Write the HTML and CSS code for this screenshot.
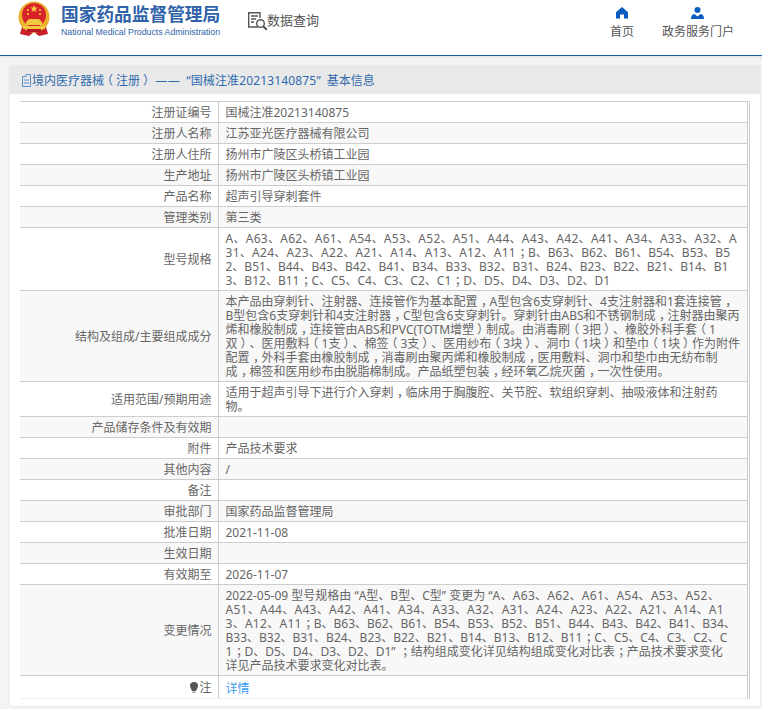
FILE: index.html
```html
<!DOCTYPE html>
<html lang="zh-CN">
<head>
<meta charset="utf-8">
<title>国家药品监督管理局 数据查询</title>
<link rel="stylesheet" href="styles.css">
</head>
<body>
<header class="header">
  <div class="brand">
    <svg class="emblem" width="32" height="35" viewBox="0 0 32 35">
      <path d="M4 26 L2 33 L11 35 L16 31 L21 35 L30 33 L28 26 Z" fill="#c8202a"/>
      <circle cx="16" cy="16" r="15.500" fill="#eab02c"/>
      <circle cx="16" cy="14" r="12" fill="#d8232a"/>
      <path d="M16 4l1 2.600h2.800l-2.200 1.700.8 2.700-2.400-1.600-2.400 1.600.8-2.700-2.200-1.700H15z" fill="#f5d142"/>
      <circle cx="10" cy="9" r="1" fill="#f5d142"/><circle cx="22" cy="9" r="1" fill="#f5d142"/>
      <circle cx="10" cy="13" r="1" fill="#f5d142"/><circle cx="22" cy="13" r="1" fill="#f5d142"/>
      <path d="M8 21l3-3h10l3 3v3H8z" fill="#f3c83e"/>
      <rect x="5" y="25" width="22" height="3" fill="#f3c83e"/>
      <rect x="9" y="28" width="14" height="3" fill="#b9171f"/>
    </svg>
    <div class="brand-text">
      <div class="brand-cn">国家药品监督管理局</div>
      <div class="brand-en">National Medical Products Administration</div>
    </div>
    <div class="query">
      <svg class="query-icon" width="21" height="20" viewBox="0 0 21 20" fill="none" stroke="#555" stroke-width="1.400">
        <path d="M11 16H1.700V1.700H13V7"/>
        <path d="M4 5h7M4 8h5M4 11h3"/>
        <circle cx="13.500" cy="12.500" r="3.800"/>
        <path d="M16.200 15.200l3.600 3.600" stroke-width="2"/>
      </svg>
      <span class="query-text">数据查询</span>
    </div>
  </div>
  <nav class="nav">
    <a class="nav-item">
      <svg width="12" height="12" viewBox="0 0 12 12"><path d="M6 0L12 5.200V11.500H8V7.500H4V11.500H0V5.200Z" fill="#0a5cc0"/></svg>
      <span>首页</span>
    </a>
    <a class="nav-item">
      <svg width="13" height="12" viewBox="0 0 13 12"><circle cx="6.500" cy="3" r="3" fill="#0a5cc0"/><path d="M0 12c0-3 1-4.500 3.500-5L6.500 9.500 9.500 7C12 7.500 13 9 13 12Z" fill="#0a5cc0"/></svg>
      <span>政务服务门户</span>
    </a>
  </nav>
</header>
<div class="hatch"></div>
<main class="panel">
  <h2 class="title"><svg class="title-icon" width="11" height="13" viewBox="0 0 11 13" fill="none" stroke="#5b8fd0" stroke-width="1"><path d="M1.500 2.500H5V.5H9.500V12.500H1.500Z"/><path d="M3 6H8M3 9H8"/></svg><span>境内医疗器械<span class="o">（</span>注册<span class="c">）</span> <span class="dash">——</span><span class="reg">“国械注准20213140875”</span>基本信息</span></h2>
  <div class="table-wrap">
    <table class="info">
      <tr><th>注册证编号</th><td>国械注准20213140875</td></tr>
      <tr><th>注册人名称</th><td>江苏亚光医疗器械有限公司</td></tr>
      <tr><th>注册人住所</th><td>扬州市广陵区头桥镇工业园</td></tr>
      <tr><th>生产地址</th><td>扬州市广陵区头桥镇工业园</td></tr>
      <tr><th>产品名称</th><td>超声引导穿刺套件</td></tr>
      <tr><th>管理类别</th><td>第三类</td></tr>
      <tr><th>型号规格</th><td><span class="a">A、A63、A62、A61、A54、A53、A52、A51、A44、A43、A42、A41、A34、A33、A32、A<br>31、A24、A23、A22、A21、A14、A13、A12、A11</span><span class="p">；</span>B、B63、B62、B61、B54、B53、B5<br>2、B51、B44、B43、B42、B41、B34、B33、B32、B31、B24、B23、B22、B21、B14、B1<br>3、B12、B11<span class="p">；</span>C、C5、C4、C3、C2、C1<span class="p">；</span>D、D5、D4、D3、D2、D1</td></tr>
      <tr><th>结构及组成/主要组成成分</th><td>本产品由穿刺针、注射器、连接管作为基本配置<span class="p">，</span>A型包含6支穿刺针、4支注射器和1套连接管<span class="p">，</span><br>B型包含6支穿刺针和4支注射器<span class="p">，</span>C型包含6支穿刺针。穿刺针由ABS和不锈钢制成<span class="p">，</span>注射器由聚丙<br>烯和橡胶制成<span class="p">，</span>连接管由ABS和PVC(TOTM增塑<span class="c">）</span>制成。由消毒刷<span class="o">（</span>3把<span class="c">）</span>、橡胶外科手套<span class="o">（</span>1<br>双<span class="c">）</span>、医用敷料<span class="o">（</span>1支<span class="c">）</span>、棉签<span class="o">（</span>3支<span class="c">）</span>、医用纱布<span class="o">（</span>3块<span class="c">）</span>、洞巾<span class="o">（</span>1块<span class="c">）</span>和垫巾<span class="o">（</span>1块<span class="c">）</span>作为附件<br>配置<span class="p">，</span>外科手套由橡胶制成<span class="p">，</span>消毒刷由聚丙烯和橡胶制成<span class="p">，</span>医用敷料、洞巾和垫巾由无纺布制<br>成<span class="p">，</span>棉签和医用纱布由脱脂棉制成。产品纸塑包装<span class="p">，</span>经环氧乙烷灭菌<span class="p">，</span>一次性使用。</td></tr>
      <tr><th>适用范围/预期用途</th><td>适用于超声引导下进行介入穿刺<span class="p">，</span>临床用于胸腹腔、关节腔、软组织穿刺、抽吸液体和注射药<br>物。</td></tr>
      <tr><th>产品储存条件及有效期</th><td></td></tr>
      <tr><th>附件</th><td>产品技术要求</td></tr>
      <tr><th>其他内容</th><td>/</td></tr>
      <tr><th>备注</th><td></td></tr>
      <tr><th>审批部门</th><td>国家药品监督管理局</td></tr>
      <tr><th>批准日期</th><td>2021-11-08</td></tr>
      <tr><th>生效日期</th><td></td></tr>
      <tr><th>有效期至</th><td>2026-11-07</td></tr>
      <tr><th>变更情况</th><td>2022-05-09 型号规格由 “A型、B型、C型” 变更为 “<span class="a">A、A63、A62、A61、A54、A53、A52、<br>A51、A44、A43、A42、A41、A34、A33、A32、A31、A24、A23、A22、A21、A14、A1<br>3、A12、A11</span><span class="p">；</span>B、B63、B62、B61、B54、B53、B52、B51、B44、B43、B42、B41、B34、<br>B33、B32、B31、B24、B23、B22、B21、B14、B13、B12、B11<span class="p">；</span>C、C5、C4、C3、C2、C<br>1<span class="p">；</span>D、D5、D4、D3、D2、D1” <span class="p">；</span>结构组成变化详见结构组成变化对比表<span class="p">；</span>产品技术要求变化<br>详见产品技术要求变化对比表。</td></tr>
      <tr class="last"><th><svg class="bulb" width="8" height="11" viewBox="0 0 8 11"><path d="M4 0a4 4 0 0 1 4 4c0 2-1.500 3-2 5H2C1.500 7 0 6 0 4a4 4 0 0 1 4-4z" fill="#555"/><rect x="2.500" y="9.500" width="3" height="1.500" fill="#999"/></svg>注</th><td><a class="link">详情</a></td></tr>
    </table>
  </div>
</main>
</body>
</html>
```
FILE: styles.css
```css
* { box-sizing: border-box; }
html, body { margin: 0; height: 709px; overflow: hidden; }
body {
  background: #f4f4f4;
  font-family: "Noto Sans", "Noto Sans CJK SC", sans-serif;
  font-size: 12px;
  line-height: 14px;
  color: #666;
}
.header {
  height: 56px;
  background: #fff;
  border-bottom: 1px solid #1b5cab;
  display: flex;
  justify-content: space-between;
  padding: 1px 28px 0 18px;
}
.brand { display: flex; align-items: flex-start; }
.emblem { margin-right: 11px; }
.brand-text { width: 160px; padding-top: 2px; }
.brand-cn { font-size: 17.700px; line-height: 22px; font-weight: 700; color: #2f62a9; white-space: nowrap; }
.brand-en { font-family: "Liberation Sans", sans-serif; font-size: 8.750px; line-height: 12px; margin-top: 1px; color: #2f62a9; white-space: nowrap; }
.query { display: flex; align-items: center; margin: 10px 0 0 26px; font-size: 13px; line-height: 20px; color: #555; }
.query-icon { margin-right: -1px; }
.query-text { margin-top: -2px; }
.nav { display: flex; gap: 28px; padding-top: 6px; }
.nav-item { display: flex; flex-direction: column; align-items: center; gap: 6px; color: #555; }
.hatch { height: 2px; background: repeating-linear-gradient(90deg, #ddd 0 1px, #f4f4f4 1px 2px); }
.panel {
  margin: 8px 2px 0 10px;
  height: 640px;
  background: #fff;
  box-shadow: 0 0 3px rgba(0,0,0,.08);
}
.title {
  margin: 0;
  height: 28px;
  background: #e9e9e9;
  display: flex;
  align-items: center;
  padding: 1px 0 0 11px;
  font-size: 12px;
  font-weight: 400;
  white-space: pre;
  color: #2f6aae;
}
.dash { letter-spacing: .5px; margin-right: 6px; }
.reg { letter-spacing: .15px; margin-right: 6px; }
.table-wrap {
  margin: 7px 10px 0;
  height: 598px;
  border-right: 3px double #ccc;
  overflow: hidden;
}
.info { width: 727px; table-layout: fixed; border-collapse: collapse; border-top: 1px solid #ccc; }
.info th, .info td {
  border-bottom: 1px solid #ccc;
  padding: 4px 6px 2px 7px;
  height: 21px;
  font-weight: 400;
}
.info th { width: 198px; text-align: right; border-right: 1px solid #ccc; }
.info td { padding-right: 0; white-space: nowrap; }
.info tr:nth-child(even) { background: #f8f8f8; }
.info .last th, .info .last td { border-bottom-color: #eee; height: 23px; }
.info .last td { padding-top: 6px; }
.link { color: #3b9bf0; }
.bulb { vertical-align: -1px; margin-right: 1px; }
.a { letter-spacing: .28px; }
.p, .o, .c { display: inline-block; width: 12px; white-space: nowrap; letter-spacing: 0; }
.p { text-indent: 3.500px; }
.o { text-indent: -3px; }
.c { text-indent: 3px; }
```
